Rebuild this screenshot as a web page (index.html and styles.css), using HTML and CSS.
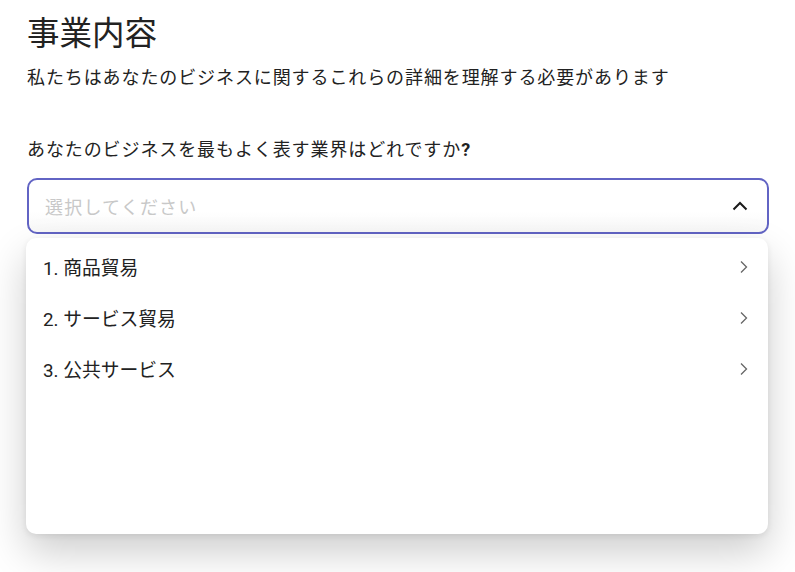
FILE: index.html
```html
<!DOCTYPE html>
<html lang="ja">
<head>
<meta charset="utf-8">
<link rel="stylesheet" href="styles.css">
</head>
<body>
<main class="page">
  <h1 class="title">事業内容</h1>
  <p class="subtitle">私たちはあなたのビジネスに関するこれらの詳細を理解する必要があります</p>
  <p class="question">あなたのビジネスを最もよく表す業界はどれですか<span class="qmark">?</span></p>
  <div class="select">
    <span class="placeholder">選択してください</span>
    <svg class="caret" width="16" height="10" viewBox="0 0 16 10"><path d="M1.5 8.5 L8 2 L14.5 8.5" fill="none" stroke="#1a1a1a" stroke-width="2"/></svg>
  </div>
  <div class="menu">
    <div class="item"><span>1. 商品貿易</span><svg class="chev" width="8" height="14" viewBox="0 0 8 14"><path d="M1 1.5 L6.5 7 L1 12.5" fill="none" stroke="#666" stroke-width="1.3"/></svg></div>
    <div class="item"><span>2. サービス貿易</span><svg class="chev" width="8" height="14" viewBox="0 0 8 14"><path d="M1 1.5 L6.5 7 L1 12.5" fill="none" stroke="#666" stroke-width="1.3"/></svg></div>
    <div class="item"><span>3. 公共サービス</span><svg class="chev" width="8" height="14" viewBox="0 0 8 14"><path d="M1 1.5 L6.5 7 L1 12.5" fill="none" stroke="#666" stroke-width="1.3"/></svg></div>
  </div>
</main>
</body>
</html>
```
FILE: styles.css
```css
* { box-sizing: border-box; }
html, body { margin: 0; background: #fff; }
body {
  font-family: Roboto, "Noto Sans CJK JP", sans-serif;
  color: #222;
  min-height: 572px;
}
.page {
  padding: 12px 26px 0 27px;
  display: flex;
  flex-direction: column;
}
.title {
  margin: 0;
  font-size: 32.5px;
  font-weight: 400;
  line-height: 44px;
  color: #222;
}
.subtitle {
  margin: 8px 0 0;
  font-size: 18px;
  letter-spacing: 0.9px;
  line-height: 28px;
}
.question {
  margin: 44px 0 0;
  font-size: 18px;
  letter-spacing: 0.9px;
  line-height: 28px;
}
.qmark { font-weight: 700; }
.select {
  margin-top: 14px;
  height: 56px;
  border: 2px solid #6264c4;
  border-radius: 10px;
  display: flex;
  align-items: center;
  justify-content: space-between;
  padding: 0 19px 0 16px;
  background: linear-gradient(#fff 60%, #f8f8f8);
}
.placeholder {
  font-size: 18px;
  color: #c8c8c8;
  letter-spacing: 1.2px;
}
.menu {
  margin-top: 4px;
  margin-left: -1px;
  margin-right: 1px;
  height: 296px;
  background: #fff;
  border-radius: 10px;
  box-shadow: 0 18px 40px rgba(0,0,0,0.2), 0 2px 6px rgba(0,0,0,0.08);
  padding: 3px 20px 0 17px;
  display: flex;
  flex-direction: column;
}
.item {
  height: 51px;
  flex: 0 0 51px;
  display: flex;
  align-items: center;
  justify-content: space-between;
  font-size: 18.8px;
  color: #222;
}
.chev { margin-right: 0; }
```
